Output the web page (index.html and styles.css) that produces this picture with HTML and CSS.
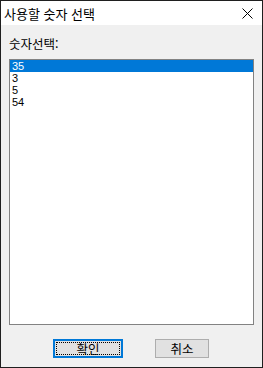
FILE: index.html
```html
<!DOCTYPE html>
<html lang="ko">
<head>
<meta charset="utf-8">
<link rel="stylesheet" href="styles.css">
</head>
<body>
<div class="window">
  <div class="titlebar">
    <span class="title">사용할 숫자 선택</span>
    <svg class="close" width="11" height="11" viewBox="0 0 11 11"><path d="M0.5 0.5 L10.5 10.5 M10.5 0.5 L0.5 10.5" stroke="#000" stroke-width="1" fill="none"/></svg>
  </div>
  <div class="content">
    <div class="label">숫자선택:</div>
    <div class="listbox">
      <div class="item selected">35</div>
      <div class="item">3</div>
      <div class="item">5</div>
      <div class="item">54</div>
    </div>
    <div class="buttons">
      <button class="btn primary"><span class="focus">확인</span></button>
      <button class="btn">취소</button>
    </div>
  </div>
</div>
</body>
</html>
```

FILE: styles.css
```css
html, body {
  margin: 0;
  padding: 0;
  background: #f0f0f0;
}
.window {
  width: 263px;
  height: 368px;
  box-sizing: border-box;
  border: 1px solid #1f1f1f;
  background: #f0f0f0;
  display: flex;
  flex-direction: column;
  font-family: "Noto Sans CJK KR", "Noto Sans", sans-serif;
}
.titlebar {
  height: 24px;
  background: #ffffff;
  display: flex;
  align-items: center;
  justify-content: space-between;
  padding: 0 9px 0 3px;
}
.title {
  font-size: 13px;
  color: #000;
  line-height: 15px;
  margin-top: 1px;
}
.close {
  display: block;
  margin-top: 1px;
}
.content {
  flex: 1;
  display: flex;
  flex-direction: column;
  padding: 0 8px;
}
.label {
  font-size: 12.5px;
  line-height: 14px;
  margin-top: 12px;
  color: #000;
}
.listbox {
  margin-top: 8px;
  height: 266px;
  box-sizing: border-box;
  border: 1px solid #828282;
  background: #fff;
  font-family: "Liberation Sans", Arial, sans-serif;
  font-size: 11px;
}
.item {
  height: 12px;
  line-height: 12px;
  padding-left: 2px;
  color: #000;
}
.item.selected {
  background: #0078d7;
  color: #fff;
}
.buttons {
  display: flex;
  margin-top: 14px;
  padding-left: 44px;
  gap: 32px;
}
.btn {
  height: 19px;
  width: 54px;
  box-sizing: border-box;
  border: 1px solid #adadad;
  background: #e1e1e1;
  font-family: "Noto Sans CJK KR", "Noto Sans", sans-serif;
  font-size: 12.5px;
  line-height: 14px;
  padding: 0;
  color: #000;
  display: flex;
  align-items: center;
  justify-content: center;
}
.btn.primary {
  width: 70px;
  border: 2px solid #0078d7;
  padding: 1px;
}
.focus {
  flex: 1;
  align-self: stretch;
  border: 1px dotted #000;
  display: flex;
  align-items: center;
  justify-content: center;
}
```
